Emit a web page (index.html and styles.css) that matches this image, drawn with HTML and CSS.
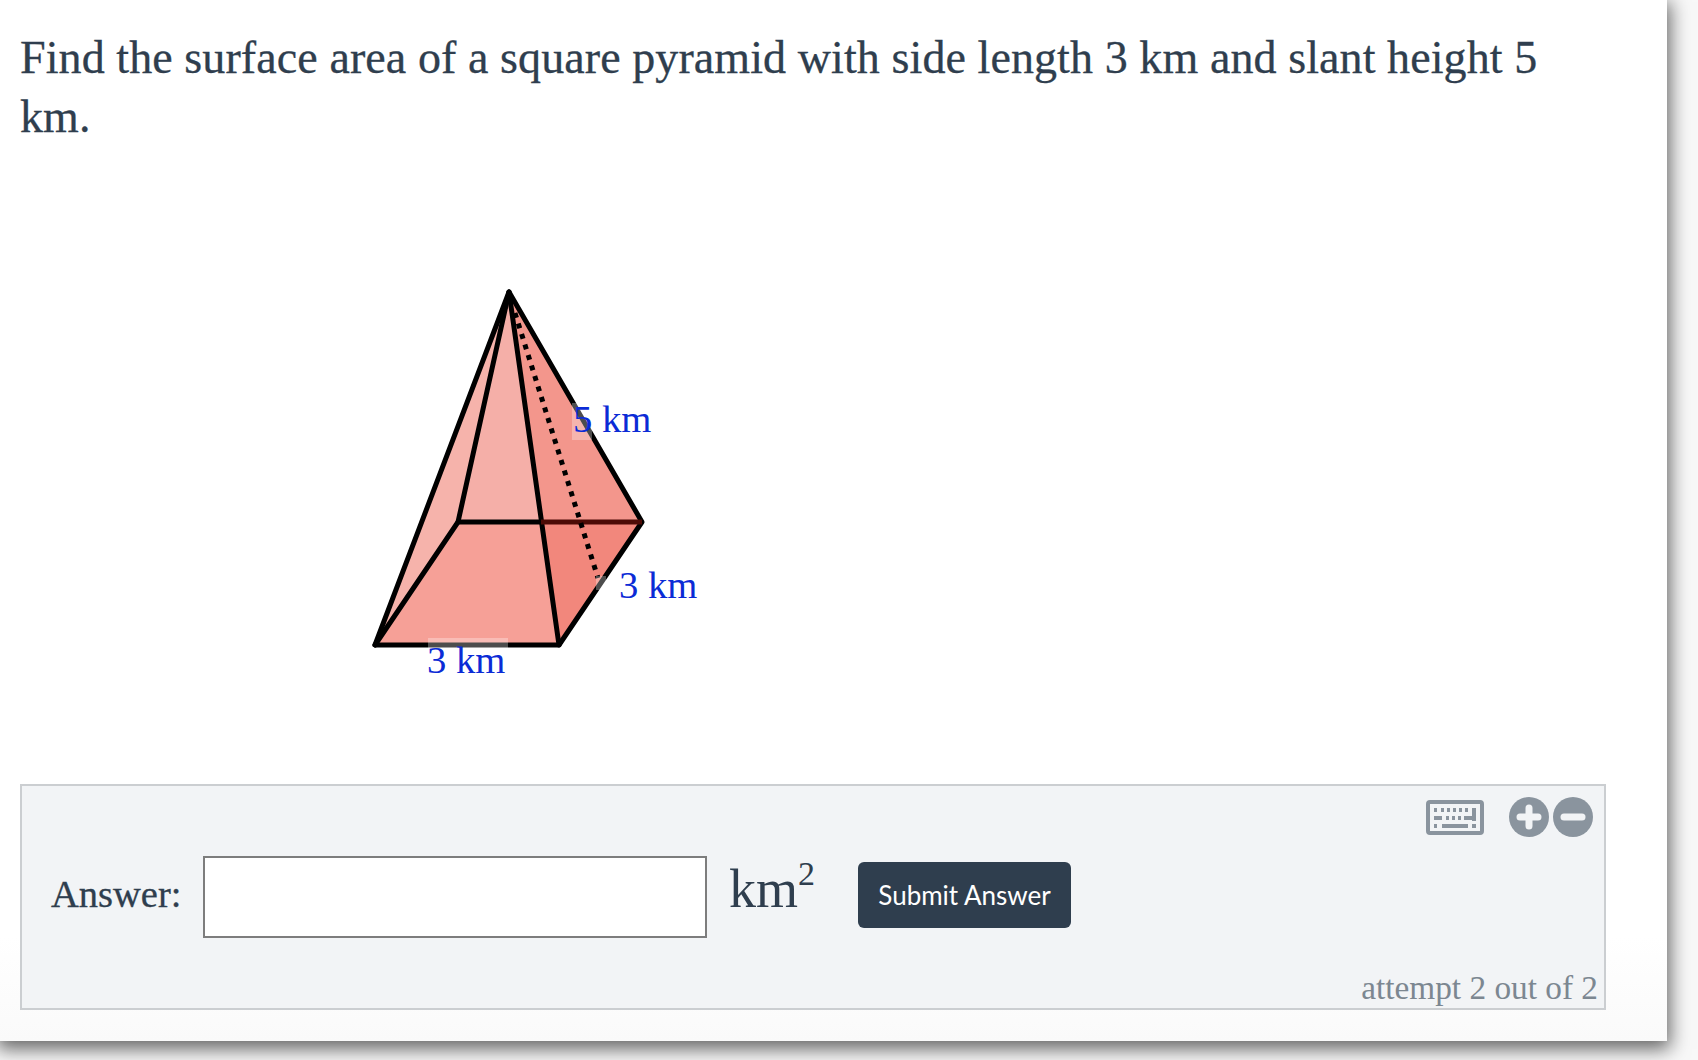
FILE: index.html
```html
<!DOCTYPE html>
<html lang="en">
<head>
  <meta charset="UTF-8" />
  <title>Square pyramid</title>
  <link rel="stylesheet" href="styles.css">
</head>
<body>
  <div class="card">
    <p class="question">Find the surface area of a square pyramid with side length 3 km and slant height 5 km.</p>

    <div class="figure">
      <svg class="pyramid" width="380" height="420" viewBox="340 270 380 420">
        <polygon points="509,292 375,645 458,522" fill="#f6b3ab" />
        <polygon points="509,292 458,522 541,522" fill="#f5afa8" />
        <polygon points="509,292 541,522 642,522" fill="#f3968c" />
        <polygon points="375,645 559,645 541,522 458,522" fill="#f6a097" />
        <polygon points="541,522 642,522 559,645" fill="#f2877c" />
        <g fill="none" stroke="#000" stroke-width="5" stroke-linejoin="round" stroke-linecap="round">
          <path d="M509 292 L375 645 L559 645 L642 522 L509 292" />
          <path d="M509 292 L458 522 L375 645" />
          <path d="M509 292 L559 645" />
          <path d="M458 522 L541 522" />
        </g>
        <path d="M541 522 L642 522" stroke="#4d0b06" stroke-width="5" />
        <path d="M515 313 L598 578" stroke="#000" stroke-width="5" stroke-dasharray="5 6" fill="none" />
        <rect x="572" y="403" width="20" height="37" fill="#fff" fill-opacity="0.3" />
        <rect x="428" y="638" width="80" height="37" fill="#fff" fill-opacity="0.3" />
        <rect x="596" y="576" width="10" height="14" fill="#fff" fill-opacity="0.3" />
        <text class="label" x="573" y="432">5 km</text>
        <text class="label" x="619" y="598">3 km</text>
        <text class="label" x="427" y="673">3 km</text>
      </svg>
    </div>

    <div class="panel">
      <div class="tools">
        <svg class="keyboard" width="58" height="35" viewBox="0 0 58 35">
          <rect x="2" y="2" width="54" height="31" rx="2" fill="none" stroke="#8a949e" stroke-width="4" />
          <g fill="#8a949e">
            <rect x="8" y="8" width="3" height="4" /><rect x="15" y="8" width="3" height="4" />
            <rect x="21" y="8" width="3" height="4" /><rect x="27" y="8" width="3" height="4" />
            <rect x="33" y="8" width="3" height="4" /><rect x="39" y="8" width="3" height="4" />
            <rect x="46" y="8" width="4" height="13" />
            <rect x="8" y="16" width="8" height="4" /><rect x="20" y="16" width="3" height="4" />
            <rect x="26" y="16" width="3" height="4" /><rect x="32" y="16" width="3" height="4" />
            <rect x="38" y="16" width="12" height="4" />
            <rect x="8" y="24" width="3" height="4" /><rect x="16" y="24" width="26" height="4" />
            <rect x="46" y="24" width="4" height="4" />
          </g>
        </svg>
        <div class="zoom-btns">
          <svg class="zoom-btn" width="40" height="40" viewBox="0 0 40 40">
            <circle cx="20" cy="20" r="20" fill="#8a949e" />
            <path d="M20 11 V29 M11 20 H29" stroke="#f2f4f6" stroke-width="7" stroke-linecap="round" />
          </svg>
          <svg class="zoom-btn" width="40" height="40" viewBox="0 0 40 40">
            <circle cx="20" cy="20" r="20" fill="#8a949e" />
            <path d="M11 20 H29" stroke="#f2f4f6" stroke-width="7" stroke-linecap="round" />
          </svg>
        </div>
      </div>

      <div class="answer-row">
        <label class="answer-label" for="answer">Answer:</label>
        <input class="answer-input" id="answer" type="text" />
        <span class="unit">km<sup>2</sup></span>
        <button class="submit" type="button">Submit Answer</button>
      </div>

      <div class="attempt">attempt 2 out of 2</div>
    </div>
  </div>
</body>
</html>
```

FILE: styles.css
```css
body {
  margin: 0;
  height: 1060px;
  overflow: hidden;
  background: #f8f8f8;
  font-family: "Liberation Serif", serif;
  color: #2f3e4e;
}
.card {
  width: 1667px;
  height: 1041px;
  box-sizing: border-box;
  padding: 28px 60px 0 20px;
  background: linear-gradient(#fff 90%, #fafafa);
  box-shadow: 0 5px 18px 3px rgba(0, 0, 0, 0.6);
}
.question {
  margin: 0;
  font-size: 46px;
  line-height: 59px;
  letter-spacing: 0.09px;
  -webkit-text-stroke: 0.3px #2f3e4e;
}
.figure {
  height: 638px;
}
.pyramid {
  display: block;
  margin-left: 320px;
  padding-top: 124px;
}
.label {
  font-family: "Liberation Serif", serif;
  font-size: 38.7px;
  fill: #0b2bd6;
}
.panel {
  width: 1586px;
  height: 226px;
  box-sizing: border-box;
  border: 2px solid #cbced1;
  background: #f2f4f6;
  display: flex;
  flex-direction: column;
}
.tools {
  display: flex;
  justify-content: flex-end;
  align-items: center;
  gap: 25px;
  padding: 11px 11px 0 0;
}
.zoom-btns {
  display: flex;
  gap: 4px;
}
.zoom-btn, .keyboard {
  display: block;
}
.answer-row {
  display: flex;
  align-items: center;
  padding: 19px 0 0 29px;
}
.answer-label {
  font-size: 38.5px;
  width: 152px;
  margin-bottom: 7px;
  -webkit-text-stroke: 0.3px #2f3e4e;
}
.answer-input {
  width: 504px;
  height: 82px;
  box-sizing: border-box;
  border: 2px solid #7d7d7d;
  background: #fff;
  padding: 0;
}
.unit {
  font-size: 54px;
  margin-left: 22px;
  width: 129px;
  margin-bottom: 16px;
}
.unit sup {
  font-size: 34px;
  line-height: 0;
  position: relative;
  top: -3px;
}
.submit {
  width: 213px;
  height: 66px;
  margin-bottom: 4px;
  border: none;
  border-radius: 6px;
  background: #2f3e4e;
  color: #fff;
  font-family: Lato, sans-serif;
  font-size: 26px;
  padding: 0;
}
.attempt {
  margin-top: auto;
  text-align: right;
  font-size: 33.3px;
  line-height: 40px;
  color: #7c8791;
  padding-right: 6px;
}
```
